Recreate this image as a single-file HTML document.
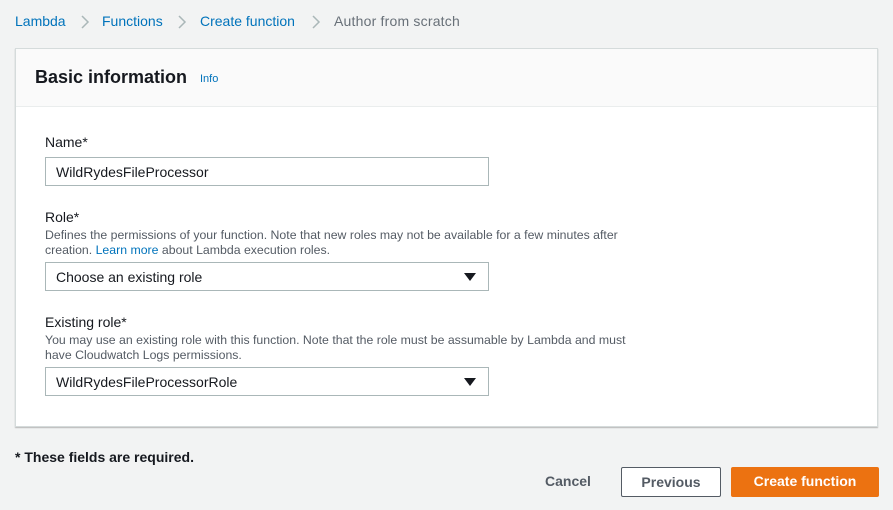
<!DOCTYPE html>
<html><head><style>
*{box-sizing:border-box;margin:0;padding:0}
body{width:893px;height:510px;background:#f2f3f3;font-family:"Liberation Sans",sans-serif;position:relative;overflow:hidden;color:#16191f}
.a{position:absolute;white-space:nowrap}
.bc{top:13px;font-size:14px;color:#0073bb}
.chev{position:absolute;top:15px}
.card{position:absolute;left:15px;top:48px;width:863px;height:379px;background:#fff;border:1px solid #d5dbdb;box-shadow:0 1px 1px rgba(0,0,0,.25)}
.hd{height:58px;background:#fafafa;border-bottom:1px solid #eaeded}
.lbl{font-size:14px;color:#16191f}
.desc{font-size:12.3px;color:#545b64;line-height:15px}
.inp{position:absolute;left:45px;width:444px;height:29px;border:1px solid #aab7b8;background:#fff;font-size:14px;padding:6px 10px}
.tri{position:absolute;right:12px;top:10px;width:0;height:0;border-left:6px solid transparent;border-right:6px solid transparent;border-top:8px solid #16191f}
.btn{position:absolute;top:467px;height:30px;font-size:14px;font-weight:bold;text-align:center;line-height:28px}
</style></head><body>
<div class="a bc" style="left:15px">Lambda</div>
<svg class="chev" style="left:80px" width="10" height="14"><path d="M2 1l6 6-6 6" fill="none" stroke="#aab7b8" stroke-width="1.5"/></svg>
<div class="a bc" style="left:102px">Functions</div>
<svg class="chev" style="left:177px" width="10" height="14"><path d="M2 1l6 6-6 6" fill="none" stroke="#aab7b8" stroke-width="1.5"/></svg>
<div class="a bc" style="left:200px">Create function</div>
<svg class="chev" style="left:311px" width="10" height="14"><path d="M2 1l6 6-6 6" fill="none" stroke="#aab7b8" stroke-width="1.5"/></svg>
<div class="a bc" style="left:334px;color:#687078;letter-spacing:0.2px">Author from scratch</div>
<div class="card"><div class="hd"></div></div>
<div class="a" style="left:35px;top:67px;font-size:18px;font-weight:bold">Basic information</div>
<div class="a" style="left:200px;top:73px;font-size:11px;color:#0073bb">Info</div>
<div class="a lbl" style="left:45px;top:134px">Name*</div>
<div class="inp" style="top:157px">WildRydesFileProcessor</div>
<div class="a lbl" style="left:45px;top:209px">Role*</div>
<div class="a desc" style="left:45px;top:228px">Defines the permissions of your function. Note that new roles may not be available for a few minutes after<br>creation. <span style="color:#0073bb">Learn more</span> about Lambda execution roles.</div>
<div class="inp" style="top:262px">Choose an existing role<span class="tri"></span></div>
<div class="a lbl" style="left:45px;top:314px">Existing role*</div>
<div class="a desc" style="left:45px;top:333px">You may use an existing role with this function. Note that the role must be assumable by Lambda and must<br>have Cloudwatch Logs permissions.</div>
<div class="inp" style="top:367px">WildRydesFileProcessorRole<span class="tri"></span></div>
<div class="a" style="left:15px;top:449px;font-size:14px;font-weight:bold">* These fields are required.</div>
<div class="btn" style="left:540px;width:56px;color:#545b64">Cancel</div>
<div class="btn" style="left:621px;width:100px;border:1px solid #545b64;background:#fff;color:#545b64;border-radius:2px">Previous</div>
<div class="btn" style="left:731px;width:148px;background:#ec7211;color:#fff;border-radius:2px">Create function</div>
</body></html>
